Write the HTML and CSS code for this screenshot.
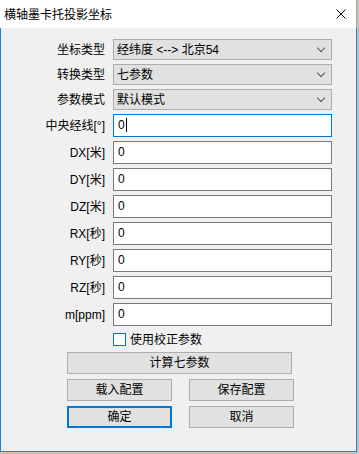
FILE: index.html
```html
<!DOCTYPE html>
<html lang="zh-CN">
    <head>
        <meta charset="UTF-8" />
        <title>横轴墨卡托投影坐标</title>
        <link rel="stylesheet" href="styles.css">
    </head>
    <body>
        <div class="dialog">
            <div class="title-bar">
                <span class="title">横轴墨卡托投影坐标</span>
                <svg class="close" width="10" height="10" viewBox="0 0 10 10">
                    <path d="M0.5 0.5 L9.5 9.5 M9.5 0.5 L0.5 9.5" stroke="#000" stroke-width="1" fill="none" />
                </svg>
            </div>
            <div class="content">
                <div class="form">
                    <label>坐标类型</label>
                    <div class="combo"><span>经纬度 &lt;--&gt; 北京54</span><i class="arrow"></i></div>
                    <label>转换类型</label>
                    <div class="combo"><span>七参数</span><i class="arrow"></i></div>
                    <label>参数模式</label>
                    <div class="combo"><span>默认模式</span><i class="arrow"></i></div>

                    <label>中央经线[°]</label>
                    <div class="field focus">0<span class="caret"></span></div>
                    <label>DX[米]</label>
                    <div class="field">0</div>
                    <label>DY[米]</label>
                    <div class="field">0</div>
                    <label>DZ[米]</label>
                    <div class="field">0</div>
                    <label>RX[秒]</label>
                    <div class="field">0</div>
                    <label>RY[秒]</label>
                    <div class="field">0</div>
                    <label>RZ[秒]</label>
                    <div class="field">0</div>
                    <label>m[ppm]</label>
                    <div class="field">0</div>

                    <div class="check">
                        <span class="box"></span>
                        <span>使用校正参数</span>
                    </div>
                </div>

                <div class="buttons">
                    <div class="btn wide">计算七参数</div>
                    <div class="btn">载入配置</div>
                    <div class="btn">保存配置</div>
                    <div class="btn default">确定</div>
                    <div class="btn">取消</div>
                </div>
            </div>
        </div>
    </body>
</html>
```
FILE: styles.css
```css
* {
    margin: 0;
    padding: 0;
    box-sizing: border-box;
}
body {
    background-color: #c4c2be;
    font-family: "Liberation Sans", "Noto Sans CJK SC", sans-serif;
    font-size: 12px;
    color: #000;
}
.dialog {
    width: 357px;
    height: 452px;
    display: flex;
    flex-direction: column;
}
.title-bar {
    height: 28px;
    background-color: #fff;
    border-right: 1px solid #a8a8a8;
    display: flex;
    align-items: center;
    justify-content: space-between;
    padding: 0 10px 0 4px;
}
.title {
    line-height: 14px;
    padding-top: 2px;
}
.close {
    display: block;
}
.content {
    flex: 1;
    background-color: #f0f0f0;
    border: 1px solid #1883d7;
    border-top: none;
    padding-top: 11px;
}

.form {
    display: grid;
    grid-template-columns: 104px 219px;
    column-gap: 8px;
    row-gap: 4px;
}
.form label {
    text-align: right;
    display: flex;
    align-items: center;
    justify-content: flex-end;
    line-height: 14px;
}
.combo {
    height: 21px;
    background-color: #e1e1e1;
    border: 1px solid #adadad;
    display: flex;
    align-items: center;
    justify-content: space-between;
    padding: 0 6px 0 3px;
    line-height: 14px;
}
.arrow {
    width: 6px;
    height: 6px;
    border-right: 1px solid #555;
    border-bottom: 1px solid #555;
    transform: rotate(45deg);
    margin-top: -4px;
    margin-right: 1px;
}
.field {
    height: 23px;
    background-color: #fff;
    border: 1px solid #7a7a7a;
    padding: 3px 0 0 4px;
    line-height: 14px;
    display: flex;
    align-items: flex-start;
}
.field.focus {
    border-color: #0078d7;
}
.caret {
    width: 1px;
    height: 14px;
    background-color: #000;
    margin-left: 1px;
}
.check {
    grid-column: 2;
    display: flex;
    align-items: center;
    gap: 4px;
    margin-top: 2px;
    height: 15px;
    line-height: 14px;
}
.check .box {
    width: 13px;
    height: 13px;
    background-color: #fff;
    border: 1px solid #0e6fc7;
}

.buttons {
    display: grid;
    grid-template-columns: 105px 105px;
    column-gap: 17px;
    row-gap: 5px;
    margin: 5px 0 0 66px;
}
.btn {
    height: 22px;
    background-color: #e1e1e1;
    border: 1px solid #adadad;
    display: flex;
    align-items: center;
    justify-content: center;
    line-height: 14px;
}
.btn.wide {
    grid-column: 1 / 3;
    width: 225px;
}
.btn.default {
    border: 2px solid #0078d7;
}
```
